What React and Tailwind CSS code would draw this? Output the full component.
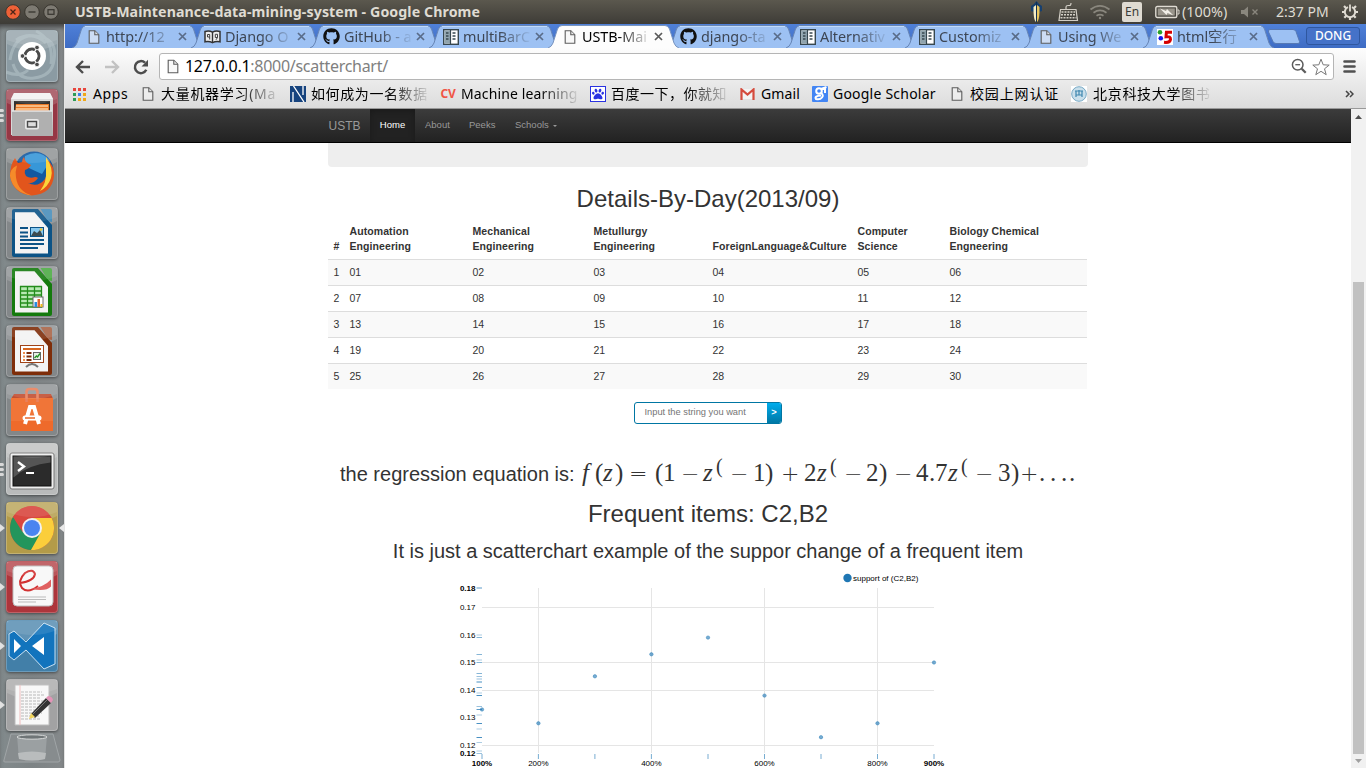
import React from "react";
import { FaGithub, FaPaw } from "react-icons/fa";

const DocIcon = ({ className = "w-3 h-[14px]" }) => (
  <svg viewBox="0 0 12 14" className={className} fill="#f4f4f4" fillOpacity=".55" stroke="#5c5c5c" strokeWidth="1.1">
    <path d="M1.2.7h5.6l4 4v8.6H1.2z" />
    <path d="M6.8.7v4h4" />
  </svg>
);
const BookIcon = () => (
  <svg viewBox="0 0 17 14" className="w-[17px] h-[14px]">
    <path d="M1 1.5q4-1.4 7.500.6 3.500-2 7.500-.6v10.300q-4-1-7.500.8-3.500-1.800-7.500-.8z" fill="#eee" stroke="#333" strokeWidth="1.500" />
    <path d="M8.500 2v10.500" stroke="#333" strokeWidth="1.400" />
    <path d="M3.500 4.500h2.200v5M3.500 4.500v2.500h2.200M11.300 4.300h2.200v3.200h-2.200zM13.500 7.500l-1.500 2.300" fill="none" stroke="#444" strokeWidth="1" />
  </svg>
);
const GridDoc = () => (
  <svg viewBox="0 0 16 16" className="w-4 h-4">
    <rect x=".7" y=".7" width="14.600" height="14.600" fill="#fff" stroke="#37474f" strokeWidth="1.400" />
    <rect x="1.400" y="1.400" width="5.600" height="13.200" fill="#90a4ae" />
    <path d="M7.500 1v14" stroke="#37474f" strokeWidth="1.200" />
    <path d="M3 4h2.500M3 7h2.500M3 10h2.500M9.500 4h3M9.500 7h3M9.500 10h3" stroke="#37474f" strokeWidth="1.500" />
  </svg>
);
const Html5Icon = () => (
  <svg viewBox="0 0 16 16" className="w-4 h-4">
    <rect width="16" height="16" fill="#fff" />
    <circle cx="3" cy="3.300" r="2.300" fill="#2aa02a" />
    <circle cx="3.800" cy="9.300" r="2.300" fill="#1515e8" />
    <path d="M15 3.200H9.400L9 7.800Q13.700 7 13.500 10.500 13 14 7 13.300" fill="none" stroke="#d60000" strokeWidth="3" />
  </svg>
);
const Git = () => <FaGithub className="w-[17px] h-[17px] text-[#111]" />;

const tabs = [
  { icon: DocIcon, text: "http://12" },
  { icon: BookIcon, text: "Django O" },
  { icon: Git, text: "GitHub - a" },
  { icon: GridDoc, text: "multiBarC" },
  { icon: DocIcon, text: "USTB-Mai", active: true },
  { icon: Git, text: "django-ta" },
  { icon: GridDoc, text: "Alternativ" },
  { icon: GridDoc, text: "Customiz" },
  { icon: DocIcon, text: "Using We" },
  { icon: Html5Icon, text: "html空行" },
];

function Tab({ icon: Icon, text, active }) {
  return (
    <div className={"relative flex w-[119px] h-6 shrink-0 items-center " + (active ? "z-20" : "z-10")}>
      <svg viewBox="0 0 132 24" className="absolute left-0 top-0 w-[132px] h-6">
        <path
          d="M0 24Q3.500 23 5 19L9.500 5Q11 1.500 14 1.500H117Q120 1.500 121.500 5L126 19Q127.500 23 131 24"
          fill={active ? "#fdfdfd" : "#9dc1f3"}
          stroke={active ? "#7894c0" : "#6785b5"}
          strokeWidth="1"
        />
        {!active && <path d="M13 2.500H118" stroke="#c1dafa" />}
      </svg>
      <div className="relative flex h-6 w-full items-center pt-px">
        <div className="flex w-[33px] shrink-0 items-center justify-center pl-[10px]"><Icon /></div>
        <div className={"ml-px h-6 w-[71px] -mr-[5px] whitespace-nowrap text-[14.4px] tracking-[-.05px] leading-6 mask-r-from-50% mask-r-to-98% " + (active ? "text-black" : "text-[#3d4654]")}>{text}</div>
        <svg viewBox="0 0 9 9" className="ml-[6px] h-[9px] w-[9px] shrink-0"><path d="M1 1l7 7M8 1L1 8" stroke={active ? "#5a5a5a" : "#596c89"} strokeWidth="1.700" /></svg>
      </div>
    </div>
  );
}

function TopPanel() {
  return (
    <div className="flex h-6 shrink-0 items-center bg-linear-to-b from-[#5b584e] to-[#3e3c37] text-[#dfdbd2]">
      <div className="flex w-[75px] items-center gap-[3px] pl-[5px]">
        <svg viewBox="0 0 16 16" className="h-4 w-4"><circle cx="8" cy="8" r="7.300" fill="#ee6137" stroke="#39362f" /><path d="M5.500 5.500l5 5M10.500 5.500l-5 5" stroke="#4a2417" strokeWidth="1.300" /></svg>
        <svg viewBox="0 0 16 16" className="h-4 w-4"><circle cx="8" cy="8" r="7.300" fill="#7d7a72" stroke="#39362f" /><path d="M4.500 8h7" stroke="#37352f" strokeWidth="1.300" /></svg>
        <svg viewBox="0 0 16 16" className="h-4 w-4"><circle cx="8" cy="8" r="7.300" fill="#7d7a72" stroke="#39362f" /><rect x="5" y="5.700" width="6" height="4.600" fill="none" stroke="#37352f" strokeWidth="1.200" /></svg>
      </div>
      <div className="w-[955px] whitespace-nowrap text-[14.2px] font-bold leading-6 tracking-[.09px]">USTB-Maintenance-data-mining-system - Google Chrome</div>
      <svg viewBox="0 0 13 24" className="h-6 w-[13px]">
        <path d="M1 6L4 4l2.500-3L9 4l3 2v5l-3 1H4l-3-1z" fill="#17406f" />
        <path d="M3.500 7L6 5v17q-2-1-2.500-10z" fill="#f6eec6" /><path d="M9.500 7L7 5v17q2-1 2.500-10z" fill="#eac55c" />
        <path d="M6.500 2v20" stroke="#14304f" strokeWidth="1" />
      </svg>
      <svg viewBox="0 0 21 20" className="ml-[15px] h-5 w-[21px]" fill="none" stroke="#d2cec5" strokeWidth="1.200">
        <path d="M8 7V5q0-1.500 2-1.500h1.500q1.500 0 1.500-2.500" /><path d="M2.500 7.500h15.500l1.500 11H1z" /><path d="M3.500 10h13.500M3 12.800h15M2.500 15.700h16" strokeDasharray="2 1" strokeWidth="1.600" />
      </svg>
      <svg viewBox="0 0 22 18" className="ml-[10px] h-[18px] w-[22px]" fill="none" stroke="#8a877e" strokeWidth="1.700"><path d="M1.500 6.500Q11-.8 20.500 6.500M4.500 9.700q6.500-4.600 13 0M7.500 12.700q3.500-2.300 7 0" /><circle cx="11" cy="15" r="1.200" fill="#8a877e" stroke="none" /></svg>
      <div className="ml-[11px] flex h-5 w-5 items-center justify-center rounded-[2px] bg-[#dfdbd2] text-[12px] text-[#3c3b37]">En</div>
      <svg viewBox="0 0 25 14" className="ml-[13px] h-[14px] w-[25px]"><rect x=".8" y="1.500" width="21" height="11" rx="1.500" fill="none" stroke="#dfdbd2" strokeWidth="1.400" /><rect x="2.800" y="3.500" width="17" height="7" fill="#99958b" /><path d="M22.500 5h1.500v4h-1.500" fill="none" stroke="#dfdbd2" /><path d="M5 3.500l6 2.500 1-2 6.500 6.500-6-2.500-1 2z" fill="#f2efe8" /></svg>
      <div className="ml-[2px] w-[59px] whitespace-nowrap text-[14.4px] leading-6">(100%)</div>
      <svg viewBox="0 0 18 12" className="h-3 w-[18px]"><path d="M0 4h3l4-3.500v11L3 8H0z" fill="#8a877e" /><path d="M11.500 3.500l5 5M16.500 3.500l-5 5" stroke="#8a877e" strokeWidth="1.400" /></svg>
      <div className="ml-[17px] w-[64px] whitespace-nowrap text-[14px] leading-6">2:37 PM</div>
      <svg viewBox="0 0 18 18" className="ml-px h-[18px] w-[18px]" fill="none" stroke="#dfdbd2">
        <path d="M7 4.200a5.200 5.200 0 1 0 4 0" strokeWidth="2" /><path d="M9 1.500v7" strokeWidth="1.800" /><path d="M9 14v3M1 9h3M14 9h3M3 3l2.200 2.200M15 3l-2.200 2.200M3.300 14.700l2-2M14.700 14.700l-2-2" strokeWidth="2.200" />
      </svg>
    </div>
  );
}

const Office = ({ main, light, children }) => (
  <>
    <path d="M8 2h24l14 16v30q0 2-2 2H8q-2 0-2-2V4q0-2 2-2z" fill={main} />
    <path d="M9 5.300h19.500L42 21v25.500H9z" fill="#f3f3f3" />
    <path d="M34.500 2H44q2 0 2 2v11q-3 0-5-2.500z" fill={light} opacity=".85" />
    {children}
  </>
);

const launchers = [
  { bg: "bg-[#8b9ba3]", art: <>
    <path d="M4 30Q8 4 30 6T48 30Q46 46 28 48 12 50 7 34M0 42Q14 48 22 40M30 1Q48 10 45 34M10 10Q26 0 40 13" fill="none" stroke="#b7c5ca" strokeWidth="3" opacity=".55" />
    <circle cx="26" cy="26" r="14" fill="#fff" /><circle cx="26" cy="26" r="7" fill="none" stroke="#4a4a4a" strokeWidth="3" />
    <path d="M26 26L15 26M26 26l6-10M26 26l6 10" stroke="#fff" strokeWidth="1.300" /><circle cx="26" cy="26" r="5.300" fill="#fff" /><circle cx="16.500" cy="26" r="2.300" fill="#4a4a4a" stroke="#fff" strokeWidth=".8" /><circle cx="31" cy="17.500" r="2.300" fill="#4a4a4a" stroke="#fff" strokeWidth=".8" /><circle cx="31" cy="34.500" r="2.300" fill="#4a4a4a" stroke="#fff" strokeWidth=".8" /></> },
  { bg: "bg-[#963745]", art: <>
    <path d="M8 4h36l3 6v36H5V10z" fill="#d8d8d8" /><path d="M8 4h36l3 6H5z" fill="#f2f2f2" /><path d="M8 12h36v10H8z" fill="#32302f" /><path d="M10 15h33v8H9z" fill="#ec7a27" /><path d="M10 17h32M10 20h32" stroke="#fbd09e" strokeWidth="1.300" />
    <path d="M6 22h40l1 25H6z" fill="#b0b0b0" /><path d="M6 22h40" stroke="#e6e6e6" strokeWidth="1.500" /><rect x="19" y="30" width="14" height="10.500" rx="2" fill="#e8e8e8" /><rect x="21.500" y="32.500" width="9" height="5.500" fill="#ddd" stroke="#494949" strokeWidth="1.400" /></>, marks: true },
  { bg: "bg-[#828687]", art: <>
    <circle cx="28" cy="23" r="19.500" fill="#1358a0" /><path d="M19 8Q34 0 44 13L36 26Q22 20 18 17z" fill="#3797d8" />
    <path d="M40 10Q49 18 48 28 46 46 26 47.500 7 46 4 28 4 17 9 10l3 5 4-1q0-3 2-5 1 6 7 8-2 4-6 5-1 3 1 6 4 3 9 1 2 0 3 1-4 6-10 5 10 5 17-4 5-9 1-21z" fill="#e2551c" /><path d="M40 9q8 12 5 21-3 9-11 13 7-9 6-20 0-8 0-14z" fill="#fbd53b" /><path d="M4 28q3 17 22 19.500-14-4-16-18-1-6 1-12-7 3-7 10.500z" fill="#f58b2a" /></> },
  { bg: "bg-[#838789]", art: <Office main="#0c5386" light="#3b8cc0"><path d="M14 21h8M14 25.500h8M14 29.500h8M14 33h24M14 37h24M14 41h18" stroke="#0c5386" strokeWidth="2" /><rect x="24.500" y="20.500" width="13" height="9" fill="#88c8ee" stroke="#0c5386" /><path d="M25 29l3-5 3 2 3-3 3 6z" fill="#3d4b50" /><circle cx="35" cy="22.500" r="1.300" fill="#ecc42f" /></Office> },
  { bg: "bg-[#838789]", art: <Office main="#147a0d" light="#3fae35"><path d="M14 20h22v21H14z" fill="#b8e9b3" /><path d="M14 20.500h22M14 25h22M14 29h22M14 33h22M14 37h22M14 41h22M14.500 20v21M21.500 20v21M28.500 20v21M35.500 20v21" stroke="#238c1b" strokeWidth="1.300" /><rect x="27" y="31" width="10" height="10" fill="#fff" stroke="#666" /><path d="M28.500 36h2.500v5h-2.500z" fill="#278be0" /><path d="M31.500 33h2.500v8h-2.500z" fill="#e0612d" /><path d="M34.500 38h2v3h-2z" fill="#f0b91c" /></Office> },
  { bg: "bg-[#838789]", art: <Office main="#7e2d09" light="#ac5c39"><path d="M26 38v2M20 42q6-6 12 0" stroke="#777" strokeWidth="2" fill="none" /><rect x="14.500" y="20.500" width="23" height="17" fill="#fff" stroke="#a04318" /><path d="M17 24h18" stroke="#d7661f" strokeWidth="2" /><path d="M17 28h2M17 31.500h2M17 35h2" stroke="#ee8d4c" strokeWidth="2" /><path d="M20.500 28h5M20.500 31.500h5M20.500 35h5" stroke="#7e2d09" strokeWidth="2" /><rect x="27.500" y="27.500" width="7" height="7" fill="#e6f1e4" stroke="#666" /><path d="M28.500 33l2-2 1 1 2.500-3.500" fill="none" stroke="#229322" strokeWidth="1.300" /></Office> },
  { bg: "bg-[#838789]", art: <>
    <path d="M8 10h37l2 5H5z" fill="#c24f31" /><path d="M5 14h42v33H5z" fill="#f07538" /><path d="M5 37h42v10H5z" fill="#ee6a2b" /><path d="M20.500 18V8q0-3 3-3h5q3 0 3 3v10" fill="none" stroke="#e8805c" strokeWidth="2.600" />
    <path d="M19 40l5-17h4l5 17" fill="none" stroke="#fff" strokeWidth="4" /><path d="M19 34h14" stroke="#fff" strokeWidth="5" strokeLinecap="round" /><path d="M19 34h10" stroke="#e8682b" strokeWidth="1.500" /></> },
  { bg: "bg-[#b9bbbb]", art: <>
    <rect x="4" y="10" width="44" height="36" rx="2" fill="#efefef" stroke="#777" /><rect x="7" y="13" width="38" height="30" fill="#2b2b2b" stroke="#111" /><path d="M7.500 13.500h37v6q-22 2-37 15z" fill="#555" /><path d="M12 19l6 4.500-6 4.500" fill="none" stroke="#fff" strokeWidth="2.400" /><path d="M20 30h8" stroke="#fff" strokeWidth="2" /></>, marks: true },
  { bg: "bg-[#b39b49]", art: <>
    <circle cx="26" cy="26" r="22" fill="#d9473f" /><path d="M26 26L7 15A22 22 0 0 0 25 48l11-17z" fill="#23955c" /><path d="M26 16h19.600A22 22 0 0 1 25 48L35 30z" fill="#fbce3b" /><path d="M26 16h19.600A22 22 0 0 0 7 15l9.500 15z" fill="#d9473f" /><circle cx="26" cy="26" r="10" fill="#f1f1f1" /><circle cx="26" cy="26" r="8" fill="#4a84f0" /></>, arrow: true, focus: true },
  { bg: "bg-[#ad353b]", art: <>
    <rect x="7" y="5" width="40" height="40" rx="4" fill="#f8f8f8" stroke="#bbb" /><path d="M12 36h28M12 38.500h28M12 41h18" stroke="#bbb" /><path d="M14 22Q28 20 29 13 27 7 19 12 11 20 16 27 22 33 32 25" fill="none" stroke="#d23232" strokeWidth="2" /><path d="M25 28Q38 26 45 18.500v7Q40 31 25 28z" fill="#e06060" /></>, arrow: true },
  { bg: "bg-[#427fa8]", art: <>
    <path d="M3 14l5-3 12 11L38 3l11 5v36l-11 5-18-19-12 10-5-4z" fill="#1274bd" stroke="#c8e1f2" strokeWidth="1" /><path d="M8 19v14l7-7zM38 17v18L26 26z" fill="#fff" /></>, arrow: true },
  { bg: "bg-[#a2a2a3]", art: <>
    <path d="M9 6h34v40H9z" fill="#f8f8f8" stroke="#bbb" /><path d="M15 13h21M15 16h24M15 19h20M15 22h23M15 25h19M15 28h22M15 31h17M15 34h21M15 37h18M15 40h19" stroke="#b8b8b8" strokeDasharray="3 1" /><path d="M14 6v40" stroke="#f0bcbc" /><path d="M25 35L40 19l5 5-16 15z" fill="#333" /><path d="M27 35l14-14" stroke="#777" /><path d="M40 19l2-2q4 0 5 4l-2 3z" fill="#e394b7" /><path d="M23 40l2-6 4 4z" fill="#f1d45c" /></>, arrow: true },
];

function Launcher() {
  return (
    <div className="flex w-[65px] shrink-0 flex-col overflow-hidden border-r border-[#e3e3e3] bg-linear-to-r from-[#828a8c] via-[#7d8385] to-[#85898b] shadow-[inset_0_5px_5px_-2px_#444]">
      <div className="flex flex-col gap-[7px] pt-[6px]">
        {launchers.map((l, i) => (
          <div key={i} className="flex h-[52px] items-center">
            <div className="flex w-[6px] shrink-0 flex-col gap-[2px]">
              {l.marks && [0, 1, 2].map((n) => <i key={n} className="block h-[3px] w-[4px] rounded-r-sm bg-[#d8d8d8]" />)}
              {l.arrow && <svg viewBox="0 0 5 8" className="h-2 w-[5px]"><path d="M0 0l5 4-5 4z" fill="#e2e2e2" /></svg>}
            </div>
            <div className={"h-[52px] w-[52px] shrink-0 overflow-hidden rounded-[4px] shadow-[inset_0_0_0_1px_rgba(255,255,255,.22),0_1px_3px_rgba(0,0,0,.45)] " + l.bg}>
              <svg viewBox="0 0 52 52" className="h-[52px] w-[52px]"><path d="M1 1h50v13Q27 27 1 14z" fill="#fff" opacity=".16" />{l.art}<path d="M1 1h50v9Q27 20 1 10z" fill="#fff" opacity=".1" /></svg>
            </div>
            {l.focus && <svg viewBox="0 0 5 8" className="ml-px h-2 w-[5px]"><path d="M5 0L0 4l5 4z" fill="#e8e8e8" /></svg>}
          </div>
        ))}
      </div>
      <svg viewBox="0 0 64 36" className="mt-[1px] h-9 w-16 shrink-0">
        <path d="M11 2h42l7 26q0 2-2 2H5q-2 0-1-2z" fill="#878c8e" stroke="#a0a5a7" /><path d="M17 4h30l-2 23q-13 3-26 0z" fill="#a0a5a7" opacity=".8" /><ellipse cx="32" cy="5" rx="15" ry="2.200" fill="#6f7577" stroke="#d6d8d8" /><path d="M18 21q14-3 28 0l-1 6q-13 3-26 0z" fill="#b9bcbd" />
      </svg>
    </div>
  );
}

const BMark = ({ w, icon, iw, children, fade, cls = "" }) => (
  <div className={"flex shrink-0 items-center whitespace-nowrap " + w}>
    <div className={"flex shrink-0 items-center " + iw}>{icon}</div>
    <div className={"leading-6 " + (fade ? "w-[120px] mask-r-from-65% mask-r-to-100% " : "") + cls}>{children}</div>
  </div>
);

function Bookmarks() {
  const colors = ["#e8453c", "#e8453c", "#e8453c", "#2e9c56", "#3f7fe8", "#f0a818", "#2e9c56", "#f0a818", "#f0a818"];
  return (
    <div className="flex h-7 items-center pl-2 text-[14px] text-black">
      <BMark w="w-[69px]" iw="w-5" cls="tracking-[.6px]" icon={<svg viewBox="0 0 13 13" className="h-[13px] w-[13px]">{colors.map((c, i) => <rect key={i} x={(i % 3) * 5} y={Math.floor(i / 3) * 5} width="3" height="3" fill={c} />)}</svg>}>Apps</BMark>
      <BMark w="w-[148px]" iw="w-[19px]" fade cls="tracking-[.7px]" icon={<DocIcon />}>大量机器学习(Ma</BMark>
      <BMark w="w-[150px]" iw="w-[21px]" fade cls="tracking-[.6px]" icon={<svg viewBox="0 0 16 16" className="h-4 w-4"><path d="M0 0h16v16H0z" fill="#16437e" /><path d="M3.500 0L14 16M3 6v10M13 0v9" stroke="#fff" strokeWidth="1.300" /></svg>}>如何成为一名数据</BMark>
      <BMark w="w-[150px]" iw="w-[21px]" fade cls="tracking-[.13px]" icon={<span className="w-4 text-center text-[12px] font-bold tracking-tight text-[#f05545]">CV</span>}>Machine learning</BMark>
      <BMark w="w-[150px]" iw="w-[21px]" fade cls="tracking-[.5px]" icon={<span className="flex h-4 w-4 items-center justify-center border border-[#2932e1] bg-white"><FaPaw className="h-3 w-3 text-[#2932e1]" /></span>}>百度一下，你就知</BMark>
      <BMark w="w-[72px]" iw="w-[21px]" cls="tracking-[.1px]" icon={<svg viewBox="0 0 15 12" className="h-3 w-[15px]"><path d="M1 1h13v10H1z" fill="#f3f3f3" /><path d="M1.500 12V1.500l6 5 6-5V12" fill="none" stroke="#d54b3d" strokeWidth="2.200" /></svg>}>Gmail</BMark>
      <BMark w="w-[139px]" iw="w-[21px]" cls="tracking-[.22px]" icon={<svg viewBox="0 0 16 16" className="h-4 w-4"><rect width="16" height="16" rx="1" fill="#4285f4" /><circle cx="7" cy="5" r="2.800" fill="none" stroke="#fff" strokeWidth="2" /><path d="M14.500 1L9 3M13 2v5M9 7q3 2 1 4.500T4 13q-2-3 5-3.500" fill="none" stroke="#fff" strokeWidth="2" /></svg>}>Google Scholar</BMark>
      <BMark w="w-[120px]" iw="w-[19px]" icon={<DocIcon />}><span className="tracking-[.85px]">校园上网认证</span></BMark>
      <BMark w="w-[150px]" iw="w-[22px]" fade cls="tracking-[.7px]" icon={<svg viewBox="0 0 16 16" className="h-4 w-4"><path d="M0 0h16v16H0z" fill="#fff" /><circle cx="8" cy="8" r="7.300" fill="#c9dfeb" stroke="#77a9c5" /><path d="M4 5h8M5 5v6M8 4v5M11 5v6M5 9h6" stroke="#3e87b0" strokeWidth="1.200" fill="none" /></svg>}>北京科技大学图书</BMark>
      <div className="flex flex-1 justify-end pr-[12px]"><svg viewBox="0 0 9 8" className="h-2 w-[9px]"><path d="M1 1l3 3-3 3M5 1l3 3-3 3" fill="none" stroke="#444" strokeWidth="1.500" /></svg></div>
    </div>
  );
}

function Toolbar() {
  return (
    <div className="flex h-9 items-center pl-[10px] pt-px">
      <svg viewBox="0 0 16 14" className="h-[14px] w-4" fill="none" stroke="#4d4d4d" strokeWidth="2.400"><path d="M15 7H2M8 1L2 7l6 6" /></svg>
      <svg viewBox="0 0 16 14" className="ml-[13px] h-[14px] w-4" fill="none" stroke="#c2c2c2" strokeWidth="2.400"><path d="M1 7h13M8 1l6 6-6 6" /></svg>
      <svg viewBox="0 0 16 16" className="ml-[13px] h-4 w-4"><path d="M13.300 10.800A6 6 0 1 1 12 3.700" fill="none" stroke="#4d4d4d" strokeWidth="2.500" /><path d="M15 .8V7.500H8.500z" fill="#4d4d4d" /></svg>
      <div className="ml-[10px] flex h-[27px] w-[1175px] items-center rounded-[3px] border border-[#b5b5b5] bg-white">
        <DocIcon className="ml-[7px] h-[15px] w-3" />
        <div className="ml-[6px] -mt-[2px] flex-1 whitespace-nowrap text-[16px] tracking-[-.28px] text-[#808080]"><span className="text-black">127.0.0.1</span>:8000/scatterchart/</div>
        <svg viewBox="0 0 16 16" className="h-4 w-4 -mt-px" fill="none" stroke="#5b5b5b"><circle cx="6.700" cy="6.700" r="5.300" strokeWidth="1.500" /><path d="M10.700 10.700l4 4" strokeWidth="2.300" /><path d="M4.300 6.700h4.800" strokeWidth="1.300" /></svg>
        <svg viewBox="0 0 18 18" className="ml-[5px] mr-[3px] h-[18px] w-[18px]"><path d="M9 1.200l2.200 5.600 6 .3-4.700 3.700 1.700 5.900L9 13.300l-5.200 3.400 1.700-5.900L.8 7.100l6-.3z" fill="#fff" stroke="#777" /></svg>
      </div>
      <svg viewBox="0 0 13 13" className="ml-[9px] h-[13px] w-[13px]" stroke="#505050" strokeWidth="2.600" strokeLinecap="round"><path d="M1.500 1.500h10M1.500 6.500h10M1.500 11.500h10" /></svg>
    </div>
  );
}

const columns = [
  ["w-[16px]", "#"], ["w-[123px]", "Automation", "Engineering"], ["w-[121px]", "Mechanical", "Engineering"], ["w-[119px]", "Metullurgy", "Engineering"],
  ["w-[145px]", "ForeignLanguage&Culture"], ["w-[92px]", "Computer", "Science"], ["w-[143px]", "Biology Chemical", "Engneering"],
];
const rows = [0, 1, 2, 3, 4];

function DayTable() {
  return (
    <table className="w-[759px] table-fixed border-collapse text-[10.5px] leading-[15px]">
      <thead>
        <tr className="h-[36px]">
          {columns.map((c) => <th key={c[0]} className={c[0] + " whitespace-nowrap pb-[5px] pl-[5.5px] text-left align-bottom font-bold tracking-[.08px]"}>{c.slice(1).map((t) => <div key={t}>{t}</div>)}</th>)}
        </tr>
      </thead>
      <tbody>
        {rows.map((r) => (
          <tr key={r} className={"h-[26px] border-t border-[#dddddd] " + (r % 2 ? "bg-white" : "bg-[#f9f9f9]")}>
            <td className="pl-[5.5px]">{r + 1}</td>
            {[1, 2, 3, 4, 5, 6].map((n) => <td key={n} className="pl-[5.5px]">{String(r * 6 + n).padStart(2, "0")}</td>)}
          </tr>
        ))}
      </tbody>
    </table>
  );
}

const glyphs = [
  ["f", 13, "f"], ["(", 8], ["z", 12, "i"], [")", 14], ["=", 26, "o"], ["(", 8], ["1", 18], ["−", 22, "o"], ["z", 12, "i"], ["(", 15, "s"],
  ["−", 23, "o"], ["1", 12], [")", 16], ["+", 23, "o"], ["2", 13], ["z", 12, "i"], ["(", 15, "s"], ["−", 22, "o"], ["2", 13], [")", 15],
  ["−", 22, "o"], ["4", 13], [".", 6], ["7", 13], ["z", 12, "i"], ["(", 15, "s"], ["−", 23, "o"], ["3", 13], [")", 9], ["+", 19, "o"],
  [".", 11], [".", 11], [".", 8], [".", 5],
];
const glyphStyle = { i: "italic", f: "italic", o: "font-['DejaVu_Sans'] text-[22px] font-extralight", s: "text-[20px] -translate-y-[8px] pl-px -mr-px" };

function Formula() {
  return (
    <span className="inline-flex items-baseline font-['Liberation_Serif',serif] text-[25px]">
      {glyphs.map(([ch, w, k], i) => <span key={i} className={"box-content block shrink-0 " + (glyphStyle[k] || "")} style={{ width: w }}>{ch}</span>)}
    </span>
  );
}

const points = [[482, 709.5], [538.4, 723.3], [594.9, 676.3], [651.4, 654.3], [708, 637.6], [764.5, 695.6], [821, 737.2], [877.5, 723.3], [934, 662.5]];
const ticksY = [[588, 0.8], [635, 0.4], [637.5, 0.6], [654.5, 0.6], [660, 0.4], [662.5, 0.6], [673.5, 0.6], [676.5, 0.5], [679, 0.5], [682, 0.9], [687.5, 0.7], [693, 0.4], [695.5, 0.9], [706.5, 0.5], [709.5, 0.8], [715, 0.4], [723.5, 0.9], [729, 0.4], [737.5, 0.9], [742.5, 0.4], [751, 0.4], [753.5, 0.5]];
const yLabels = [["0.18", 588, 1], ["0.17", 607.4], ["0.16", 635.2], ["0.15", 662.4], ["0.14", 690.2], ["0.13", 717.4], ["0.12", 745.2], ["0.12", 753.2, 1]];
const xLabels = [["100%", 482, 1], ["200%", 538.4], ["400%", 651.4], ["600%", 764.5], ["800%", 877.5], ["900%", 934, 1]];

function Chart() {
  return (
    <svg viewBox="450 568 500 200" className="ml-[385px] mt-[2px] block h-[200px] w-[500px] shrink-0 font-['Liberation_Sans',sans-serif]">
      <g stroke="#e5e5e5">
        {[607.5, 662.5, 690.5, 745.5].map((y) => <path key={y} d={`M482 ${y}H934`} />)}
        {[538.5, 651.5, 764.5, 877.5].map((x) => <path key={x} d={`M${x} 588V753`} />)}
      </g>
      <g stroke="#1f77b4">
        {ticksY.map(([y, o]) => <path key={y} d={`M476.500 ${y}H482`} opacity={o * 0.9} />)}
        {points.map(([x]) => <path key={x} d={`M${x} 754V759`} opacity=".6" />)}
      </g>
      {points.map(([x, y]) => <circle key={x} cx={x} cy={y} r="1.700" fill="#1f77b4" fillOpacity=".6" stroke="#1f77b4" strokeOpacity=".45" />)}
      <g fontSize="8" fill="#000">
        {yLabels.map(([t, y, b]) => <text key={y} x="475.500" y={y + 2.8} textAnchor="end" fontWeight={b ? 700 : 400}>{t}</text>)}
        {xLabels.map(([t, x, b]) => <text key={x} x={x} y="766.300" textAnchor="middle" fontWeight={b ? 700 : 400}>{t}</text>)}
        <circle cx="847.500" cy="578" r="4.200" fill="#1f77b4" />
        <text x="853" y="581">support of (C2,B2)</text>
      </g>
    </svg>
  );
}

function Page() {
  return (
    <div className="flex h-[659px] overflow-hidden bg-white font-['Liberation_Sans',sans-serif] text-[#333]">
      <div className="flex w-[1286px] shrink-0 flex-col overflow-hidden">
        <nav className="flex h-[34px] shrink-0 items-center border-b border-black bg-linear-to-b from-[#3c3c3c] to-[#222] pl-[263px] text-[9.5px] text-[#999]">
          <div className="w-[42px] pl-[.5px] text-[12px]">USTB</div>
          <div className="flex h-[33px] w-[45px] items-center justify-center bg-[#222] text-white shadow-[inset_0_2px_6px_rgba(0,0,0,.25)]">Home</div>
          <div className="ml-[10px] w-[44px]">About</div>
          <div className="w-[46px]">Peeks</div>
          <div className="flex items-center gap-[4px]">Schools<svg viewBox="0 0 4 2" className="h-[2px] w-1"><path d="M0 0h4L2 2z" fill="#999" /></svg></div>
        </nav>
        <div className="ml-[263px] h-6 w-[760px] shrink-0 rounded-b-[4px] bg-[#eeeeee]" />
        <h2 className="ml-[263px] mt-[17px] w-[760px] shrink-0 text-center text-[24px] leading-[30px]">Details-By-Day(2013/09)</h2>
        <div className="ml-[263px] mt-[9px] h-[166px] shrink-0"><DayTable /></div>
        <div className="ml-[569px] mt-[13px] flex h-[22px] w-[148px] shrink-0 overflow-hidden rounded-[3px] border border-[#0076a3] text-[9.3px]">
          <div className="flex flex-1 items-center whitespace-nowrap pl-[9.5px] text-[#757575]">Input the string you want</div>
          <div className="flex w-[14px] items-center justify-center bg-linear-to-b from-[#00adee] to-[#0078a5] font-bold text-white">&gt;</div>
        </div>
        <div className="ml-[275px] mt-[29px] flex h-[40px] w-[760px] shrink-0 items-baseline whitespace-nowrap leading-[40px] text-[20px]"><span className="w-[242px]">the regression equation is:</span><Formula /></div>
        <h2 className="ml-[263px] mt-[6px] w-[760px] shrink-0 text-center text-[24px] leading-[30px]">Frequent items: C2,B2</h2>
        <h3 className="ml-[263px] mt-[7px] w-[760px] shrink-0 text-center text-[20px] leading-[30px]">It is just a scatterchart example of the suppor change of a frequent item</h3>
        <Chart />
      </div>
      <div className="flex w-[15px] flex-col items-center bg-[#f1f1f1]">
        <svg viewBox="0 0 7 4" className="mt-[6px] h-1 w-[7px]"><path d="M0 4L3.500 0 7 4z" fill="#505050" /></svg>
        <div className="mt-[163px] h-[472px] w-[11px] bg-[#c1c1c1]" />
        <svg viewBox="0 0 7 4" className="mt-[5px] h-1 w-[7px]"><path d="M0 0h7L3.500 4z" fill="#a0a0a0" /></svg>
      </div>
    </div>
  );
}

export default function App() {
  return (
    <div className="flex h-[768px] w-[1366px] flex-col overflow-hidden font-['Noto_Sans','Noto_Sans_CJK_SC',sans-serif]">
      <TopPanel />
      <div className="flex h-[744px]">
        <Launcher />
        <div className="flex w-[1301px] flex-col">
          <div className="flex h-6 items-center bg-linear-to-b from-[#4f80d8] to-[#3e6cc4] pl-[7px]">
            {tabs.map((t) => <Tab key={t.text} {...t} />)}
            <svg viewBox="0 0 34 18" className="relative z-20 ml-[5px] h-[18px] w-[34px]"><path d="M3 2.500h23q2 0 3 2l3.500 10q.5 2-1.500 2H9q-2 0-3-2L1.500 5Q1 2.500 3 2.500z" fill="#9dc1f3" stroke="#5679b5" /></svg>
            <div className="ml-[5px] flex h-[18px] w-[54px] items-center justify-center rounded-[3px] border border-[#2f579f] bg-[#4572c8] text-[12px] font-medium text-white">DONG</div>
          </div>
          <div className="flex h-[61px] flex-col border-b border-[#999] bg-linear-to-b from-[#fdfdfd] to-[#dcdcdc] pt-0">
            <Toolbar />
            <div className="-mt-[4px]"><Bookmarks /></div>
          </div>
          <Page />
        </div>
      </div>
    </div>
  );
}
